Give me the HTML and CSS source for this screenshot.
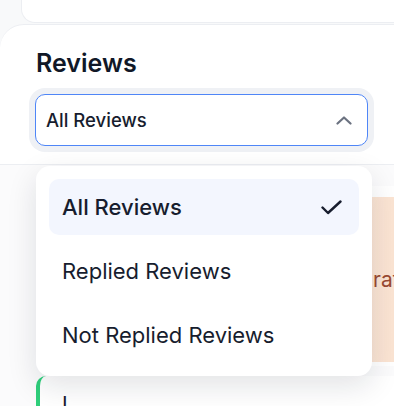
FILE: index.html
```html
<!DOCTYPE html>
<html lang="en">
<head>
  <meta charset="UTF-8" />
  <meta name="viewport" content="width=device-width, initial-scale=1.0"/>
  <title>Reviews</title>
  <link rel="stylesheet" href="styles.css">
</head>
<body>
  <div class="top-card"></div>

  <div class="panel">
    <h2 class="panel-title">Reviews</h2>
    <div class="select-ring">
      <div class="select">
        <span>All Reviews</span>
        <svg class="chevron" width="16" height="9" viewBox="0 0 16 9">
          <path d="M1.5 7.5 L8 1.5 L14.5 7.5" fill="none" stroke="#6b7280" stroke-width="2.2" stroke-linecap="round" stroke-linejoin="round"/>
        </svg>
      </div>
    </div>
  </div>

  <div class="list">
    <div class="review">
      <div class="rating-box">
        <span class="rating-text">rating</span>
      </div>
    </div>
    <div class="review review-green">
      <span class="review-name">I</span>
    </div>

    <div class="menu">
      <div class="menu-item active">
        <span>All Reviews</span>
        <svg width="21" height="15" viewBox="0 0 21 15">
          <path d="M1.5 7.5 L7 13 L19.5 1.5" fill="none" stroke="#171d2e" stroke-width="2.4" stroke-linecap="round" stroke-linejoin="round"/>
        </svg>
      </div>
      <div class="menu-item">Replied Reviews</div>
      <div class="menu-item">Not Replied Reviews</div>
    </div>
  </div>
</body>
</html>
```

FILE: styles.css
```css
body {
  margin: 0;
  width: 394px;
  height: 406px;
  overflow: hidden;
  background: #f8f9fa;
  font-family: 'Inter', sans-serif;
  color: #171d2e;
}

.top-card {
  height: 22px;
  margin-left: 21px;
  background: #fff;
  border: 1px solid #eceef2;
  border-top: 0;
  border-right: 0;
  border-radius: 0 0 0 14px;
}

.panel {
  margin-top: 1px;
  background: #fff;
  border-top: 1px solid #eceef2;
  border-bottom: 1px solid #eceef2;
  border-radius: 24px 0 0 0;
  padding: 23px 20px 12px 29px;
}

.panel-title {
  margin: 0 0 10px 7px;
  font-size: 25px;
  line-height: 30px;
  font-weight: 600;
  color: #111827;
}

.select-ring {
  width: 345px;
  box-sizing: border-box;
  padding: 6px;
  background: #eff1f5;
  border-radius: 16px;
}

.select {
  height: 52px;
  box-sizing: border-box;
  display: flex;
  align-items: center;
  justify-content: space-between;
  padding: 0 15px 0 10px;
  background: #fff;
  border: 1px solid #4f86f7;
  border-radius: 10px;
  font-size: 18.5px;
  font-weight: 500;
}

.list {
  position: relative;
  height: 240px;
  padding: 21px 0 0 36px;
  background: #fbfbfc;
}

.review {
  height: 180px;
  background: #fff;
  border-radius: 12px 0 0 12px;
  padding: 11px 0 0 0;
  box-sizing: border-box;
}

.rating-box {
  height: 165px;
  background: linear-gradient(90deg, #fcebdd, #fbe4d3);
  display: flex;
  align-items: center;
  white-space: nowrap;
}

.rating-text {
  padding-left: 337px;
  font-size: 21px;
  color: #9a4a32;
}

.review-green {
  height: 60px;
  margin-top: 10px;
  padding: 16px 0 0 22px;
  border-left: 4px solid #2fcf7b;
  border-radius: 10px 0 0 0;
  font-size: 21px;
}

.menu {
  position: absolute;
  left: 36px;
  top: 1px;
  width: 336px;
  box-sizing: border-box;
  padding: 13px;
  display: flex;
  flex-direction: column;
  gap: 8px;
  background: #fff;
  border-radius: 14px;
  box-shadow: 0 10px 30px rgba(20, 24, 40, 0.12);
}

.menu-item {
  height: 56px;
  display: flex;
  align-items: center;
  justify-content: space-between;
  padding: 0 17px 0 13px;
  border-radius: 10px;
  font-size: 22px;
}

.menu-item.active {
  background: #f3f6fe;
  font-weight: 500;
}
```
